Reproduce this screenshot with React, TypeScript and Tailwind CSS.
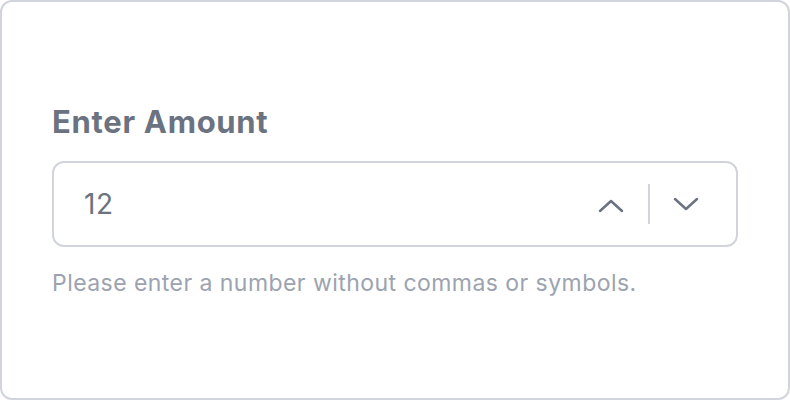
import React, { useState } from 'react';

function Chevron({ up }: { up?: boolean }) {
  return (
    <svg width="26" height="14" viewBox="0 0 26 14" fill="none" className="block">
      <polyline
        points={up ? '2,12 13,2 24,12' : '2,2 13,12 24,2'}
        stroke="#6b7280"
        strokeWidth="2.5"
        strokeLinecap="round"
        strokeLinejoin="round"
      />
    </svg>
  );
}

export default function App() {
  const [value, setValue] = useState(12);

  return (
    <div className="w-[790px] h-[400px] bg-white font-['Inter',sans-serif]">
      <div className="w-full h-full border-2 border-[#d1d5db] rounded-xl flex flex-col justify-center px-[50px]">
        <label className="text-[31px] leading-9 font-bold tracking-[0.7px] text-[#6b7280]">Enter Amount</label>

        <div className="mt-[21px] h-[86px] border-2 border-[#d1d5db] rounded-xl flex items-center pl-[30px] pr-[37px]">
          <span className="flex-1 text-[28px] tracking-[0.5px] text-[#6b7280]">{value}</span>
          <button onClick={() => setValue(v => v + 1)} className="mt-[5px]">
            <Chevron up />
          </button>
          <div className="w-[2px] h-10 bg-[#d1d5db] ml-[24px] mr-[23px]" />
          <button onClick={() => setValue(v => v - 1)}>
            <Chevron />
          </button>
        </div>

        <p className="mt-[22px] text-[23px] leading-7 tracking-[0.45px] text-[#9ca3af]">
          Please enter a number without commas or symbols.
        </p>
      </div>
    </div>
  );
}
